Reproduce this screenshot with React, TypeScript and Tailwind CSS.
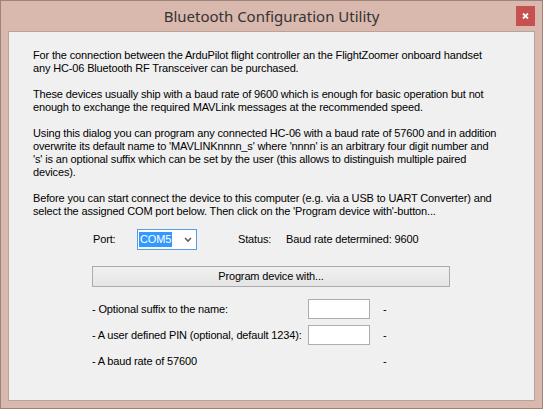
const paragraphs = [
  [
    "For the connection between the ArduPilot flight controller an the FlightZoomer onboard handset",
    "any HC-06 Bluetooth RF Transceiver can be purchased.",
  ],
  [
    "These devices usually ship with a baud rate of 9600 which is enough for basic operation but not",
    "enough to exchange the required MAVLink messages at the recommended speed.",
  ],
  [
    "Using this dialog you can program any connected HC-06 with a baud rate of 57600 and in addition",
    "overwrite its default name to 'MAVLINKnnnn_s' where 'nnnn' is an arbitrary four digit number and",
    "'s' is an optional suffix which can be set by the user (this allows to distinguish multiple paired",
    "devices).",
  ],
  [
    "Before you can start connect the device to this computer (e.g. via a USB to UART Converter) and",
    "select the assigned COM port below. Then click on the 'Program device with'-button...",
  ],
];

const App = () => {
  return (
    <div className="w-[543px] h-[409px] border border-[#a0827a] bg-[#d9b8ad] flex flex-col font-['Liberation_Sans',Arial,sans-serif] text-[11px] leading-[13px] tracking-[-0.15px] text-black">
      {/* Title bar */}
      <div className="h-[30px] flex items-start relative">
        <div className="flex-1 text-center pt-[5px] font-['Noto_Sans','Open_Sans',sans-serif] text-[15px] leading-[20px] tracking-normal text-[#333333]">
          Bluetooth Configuration Utility
        </div>
        <div className="absolute right-[7px] top-[5px] w-[19px] h-[20px] bg-[#c75050] flex items-center justify-center">
          <svg width="7" height="6" viewBox="0 0 7 6">
            <path d="M1 0.5 L6 5.5 M6 0.5 L1 5.5" stroke="#fff" strokeWidth="1.8" />
          </svg>
        </div>
      </div>

      {/* Client area */}
      <div className="mx-[7px] h-[370px] border border-[#bda299] bg-[#f0f0f0] flex flex-col">
        <div className="pl-[24px] pt-[17px] flex flex-col gap-[13px]">
          {paragraphs.map((p, i) => (
            <div key={i}>
              {p.map((line) => (
                <div key={line} className="whitespace-nowrap">
                  {line}
                </div>
              ))}
            </div>
          ))}
        </div>

        {/* Port row */}
        <div className="mt-[11px] h-[21px] flex items-center pl-[84px] whitespace-nowrap">
          <span className="w-[44px]">Port:</span>
          <div className="w-[60px] h-[21px] border border-[#569de5] bg-white flex items-center pl-[1px] pr-[4px]">
            <span className="bg-[#3399ff] text-white px-[1px] leading-[15px]">COM5</span>
            <span className="flex-1" />
            <svg width="8" height="6" viewBox="0 0 8 6">
              <path d="M1 1 L4 4 L7 1" stroke="#606060" strokeWidth="1.6" fill="none" />
            </svg>
          </div>
          <span className="ml-[41px] w-[48px]">Status:</span>
          <span>Baud rate determined: 9600</span>
        </div>

        {/* Program button */}
        <div className="mt-[16px] pl-[83px]">
          <button className="w-[358px] h-[21px] border border-[#acacac] bg-gradient-to-b from-[#f0f0f0] to-[#e5e5e5] text-center">
            Program device with...
          </button>
        </div>

        {/* Options */}
        <div className="mt-[12px] pl-[83px] flex flex-col gap-[6px] whitespace-nowrap">
          <div className="h-[20px] flex items-center">
            <span className="w-[216px]">- Optional suffix to the name:</span>
            <div className="w-[62px] h-[20px] border border-[#abadb3] bg-white" />
            <span className="ml-[13px]">-</span>
          </div>
          <div className="h-[20px] flex items-center">
            <span className="w-[216px]">- A user defined PIN (optional, default 1234):</span>
            <div className="w-[62px] h-[20px] border border-[#abadb3] bg-white" />
            <span className="ml-[13px]">-</span>
          </div>
          <div className="h-[20px] flex items-center">
            <span className="w-[291px]">- A baud rate of 57600</span>
            <span>-</span>
          </div>
        </div>
      </div>
    </div>
  );
};

export default App;
